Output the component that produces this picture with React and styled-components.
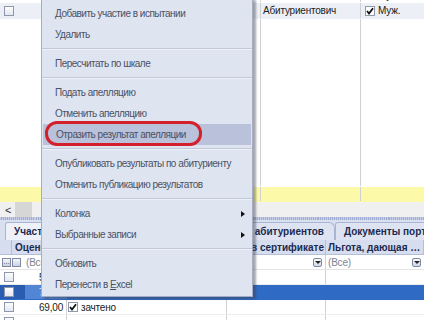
import React from "react"
import styled, { createGlobalStyle } from "styled-components"

const GlobalStyle = createGlobalStyle`
  html, body { margin: 0; padding: 0; background: #fff; }
  *, *::before, *::after { box-sizing: border-box; }
  body { font-family: "Liberation Sans", Arial, sans-serif; font-size: 10px; color: #222; }
`

const TOP_COLS = "25px 236px 100px 1fr"
const BOTTOM_COLS = "25px 42px 160px 99px 1fr"

const Screen = styled.div`
  position: relative;
  width: 424px;
  height: 320px;
  overflow: hidden;
  display: flex;
  flex-direction: column;
  background: #fff;
  & > * {
    flex-shrink: 0;
  }
`

const TopGrid = styled.div`
  height: 187px;
  display: flex;
  flex-direction: column;
  overflow: hidden;
`

const Row = styled.div`
  display: grid;
  grid-template-columns: ${(p) => p.$cols};
  height: ${(p) => p.$h || 15}px;
  flex: ${(p) => (p.$fill ? 1 : "none")};
  margin-top: ${(p) => p.$offset || 0}px;
  background: ${(p) => p.$bg || "transparent"};
  border-bottom: 1px solid ${(p) => p.$rule || "transparent"};
  color: ${(p) => p.$color || "#222"};
  letter-spacing: -0.2px;
`

const Cell = styled.div`
  display: flex;
  align-items: center;
  gap: 3px;
  padding: 0 ${(p) => p.$pad ?? 3}px;
  justify-content: ${(p) => p.$justify || "flex-start"};
  border-right: 1px solid ${(p) => (p.$line ? "#d0d0d0" : "transparent")};
  background: ${(p) => p.$bg || "transparent"};
  overflow: hidden;
  white-space: nowrap;
`

const Box = styled.span`
  flex: none;
  width: 10px;
  height: 10px;
  border: 1px solid #8d98ad;
  background: ${(p) => (p.$checked ? "#fff" : "linear-gradient(#fdfdfe, #e3e7ef)")};
  display: inline-flex;
  align-items: center;
  justify-content: center;
`

function Check({ checked }) {
  return (
    <Box $checked={checked}>
      {checked && (
        <svg width="8" height="8" viewBox="0 0 8 8">
          <path d="M1 4 L3 6.5 L7 1.2" fill="none" stroke="#111" strokeWidth="1.8" />
        </svg>
      )}
    </Box>
  )
}

const NewRow = styled(Row)`
  background: #fcf9a8;
`

const HScroll = styled.div`
  height: 15px;
  display: flex;
  align-items: center;
  gap: 4px;
  padding-left: 5px;
  background: #f0f0f0;
  color: #333;
  font-size: 11px;
`

const Thumb = styled.span`
  width: 17px;
  height: 15px;
  background: #d6d6d6;
`

const TabStrip = styled.div`
  height: 23px;
  display: flex;
  align-items: flex-end;
  padding-left: 5px;
  background: #d9e0ef;
  border-top: 3px solid transparent;
  border-image: repeating-linear-gradient(90deg, #9fadd2 0 1px, #c6cfe6 1px 2px) 3;
`

const Tab = styled.div`
  flex: none;
  height: 18px;
  display: flex;
  align-items: center;
  padding: 0 ${(p) => p.$pad || 8}px;
  width: ${(p) => (p.$w ? `${p.$w}px` : "auto")};
  justify-content: ${(p) => (p.$end ? "flex-end" : "flex-start")};
  font-weight: bold;
  color: #1b2a4e;
  background: ${(p) => (p.$active ? "#eef1f8" : "#dde3f1")};
  border: 1px solid #a9b5d2;
  border-bottom: none;
  border-radius: 3px 6px 0 0;
  white-space: nowrap;
  overflow: hidden;
`

const HeaderRow = styled(Row)`
  background: #d5ddef;
  font-weight: bold;
  color: #1b2a4e;
  border-bottom: 1px solid #b3bfd9;
  letter-spacing: 0;
`

const HeadCell = styled(Cell)`
  border-right: 1px solid #b3bfd9;
  justify-content: ${(p) => (p.$end ? "flex-end" : "flex-start")};
`

const Ellipsis = styled.span`
  overflow: hidden;
  text-overflow: ellipsis;
`

const Muted = styled.span`
  color: #7d8494;
`

const Drop = styled.span`
  margin-left: auto;
  width: 9px;
  height: 9px;
  border: 1px solid #7f8aa2;
  border-radius: 2px;
  background: linear-gradient(#fbfbfd, #cfd6e6);
  display: inline-flex;
  align-items: center;
  justify-content: center;
  &::after {
    content: "";
    border-left: 3px solid transparent;
    border-right: 3px solid transparent;
    border-top: 3px solid #222;
  }
`

const TinyBtn = styled.span`
  width: 9px;
  height: 9px;
  border: 1px solid #7f8aa2;
  background: linear-gradient(#f4f6fb, #c9d1e3);
  font-size: 7px;
  line-height: 5px;
  text-align: center;
  color: #222;
`

const Menu = styled.div`
  position: absolute;
  left: 41px;
  top: -2px;
  width: 212px;
  padding: 4px 0 1px;
  background: #dfe4f1;
  border: 1px solid #a4adc4;
  box-shadow: 3px 2px 2px rgba(60, 60, 70, 0.45);
  color: #4a5264;
  letter-spacing: -0.5px;
`

const Item = styled.div`
  position: relative;
  height: 21px;
  display: flex;
  align-items: center;
  padding: 0 7px 0 13px;
  margin: 0 ${(p) => (p.$active ? 1 : 0)}px;
  background: ${(p) => (p.$active ? "#b9c1db" : "transparent")};
  white-space: nowrap;
`

const Arrow = styled.span`
  margin-left: auto;
  border-top: 3.5px solid transparent;
  border-bottom: 3.5px solid transparent;
  border-left: 4px solid #111;
`

const Sep = styled.div`
  height: 8px;
  display: flex;
  flex-direction: column;
  justify-content: center;
  &::before {
    content: "";
    height: 1px;
    background: #c2c8d8;
  }
  &::after {
    content: "";
    height: 1px;
    background: #eef1f8;
  }
`

const Ring = styled.span`
  position: absolute;
  left: 2px;
  top: -3px;
  width: 157px;
  height: 25px;
  border: 3px solid #d3202b;
  border-radius: 12px;
`

const menu = [
  "Добавить участие в испытании",
  "Удалить",
  "-",
  "Пересчитать по шкале",
  "-",
  "Подать апелляцию",
  "Отменить апелляцию",
  "Отразить результат апелляции",
  "-",
  "Опубликовать результаты по абитуриенту",
  "Отменить публикацию результатов",
  "-",
  "Колонка",
  "Выбранные записи",
  "-",
  "Обновить",
  "Перенести в Excel",
]

const submenus = ["Колонка", "Выбранные записи"]

function ContextMenu() {
  return (
    <Menu>
      {menu.map((label, i) => {
        if (label === "-") return <Sep key={i} />
        const active = label === "Отразить результат апелляции"
        return (
          <Item key={i} $active={active}>
            {label === "Перенести в Excel" ? (
              <span>
                Перенести в <u>E</u>xcel
              </span>
            ) : (
              label
            )}
            {submenus.includes(label) && <Arrow />}
            {active && <Ring />}
          </Item>
        )
      })}
    </Menu>
  )
}

export default function App() {
  return (
    <>
      <GlobalStyle />
      <Screen>
        <TopGrid>
          <Row $cols={TOP_COLS} $offset={-12}>
            <Cell $pad={4}><Check /></Cell>
            <Cell $line />
            <Cell $line />
            <Cell $pad={4}><Check />Муж.</Cell>
          </Row>
          <Row $cols={TOP_COLS} $h={16} $bg="#eceff5">
            <Cell $pad={4}><Check /></Cell>
            <Cell $line />
            <Cell $line $pad={2}>Абитуриентович</Cell>
            <Cell $pad={4}><Check checked />Муж.</Cell>
          </Row>
          <Row $cols={TOP_COLS} $fill>
            <Cell />
            <Cell $line />
            <Cell $line />
            <Cell />
          </Row>
        </TopGrid>
        <NewRow $cols={TOP_COLS}>
          <Cell />
          <Cell $line />
          <Cell $line />
          <Cell />
        </NewRow>
        <HScroll>
          &lt;
          <Thumb />
        </HScroll>
        <TabStrip>
          <Tab $active $w={130}>Участники испытаний</Tab>
          <Tab $w={200} $end $pad={10}>Список абитуриентов</Tab>
          <Tab>Документы портфолио</Tab>
        </TabStrip>
        <HeaderRow $cols="12px 215px 99px 1fr">
          <HeadCell />
          <HeadCell>Оценка</HeadCell>
          <HeadCell $end $pad={1}>Балл в сертификате</HeadCell>
          <HeadCell $pad={2}><Ellipsis>Льгота, дающая особые права</Ellipsis></HeadCell>
        </HeaderRow>
        <Row $cols={BOTTOM_COLS} $rule="#e4e4e4">
          <Cell $pad={2} style={{ gap: 1 }}>
            <TinyBtn>…</TinyBtn>
            <TinyBtn />
          </Cell>
          <Cell $pad={1}><Muted>(Все)</Muted></Cell>
          <Cell $line />
          <Cell $line><Drop /></Cell>
          <Cell $pad={2}><Muted>(Все)</Muted><Drop /></Cell>
        </Row>
        <Row $cols={BOTTOM_COLS} $rule="#ececec">
          <Cell $pad={4}><Check /></Cell>
          <Cell $justify="flex-end" $line>56,00</Cell>
          <Cell $line />
          <Cell $line />
          <Cell />
        </Row>
        <Row $cols={BOTTOM_COLS} $bg="#2f6bc4" $color="#fff">
          <Cell $pad={4} $bg="#2a5cb2"><Check /></Cell>
          <Cell $justify="flex-end" $bg="#5286d4">73,00</Cell>
          <Cell />
          <Cell />
          <Cell />
        </Row>
        <Row $cols={BOTTOM_COLS} $rule="#ececec">
          <Cell $pad={4}><Check /></Cell>
          <Cell $justify="flex-end" $line>69,00</Cell>
          <Cell $line $pad={1}><Check checked />зачтено</Cell>
          <Cell $line />
          <Cell />
        </Row>
        <Row $cols={BOTTOM_COLS}>
          <Cell $pad={4}><Check /></Cell>
          <Cell $line />
          <Cell $line />
          <Cell $line />
          <Cell />
        </Row>
        <ContextMenu />
      </Screen>
    </>
  )
}
